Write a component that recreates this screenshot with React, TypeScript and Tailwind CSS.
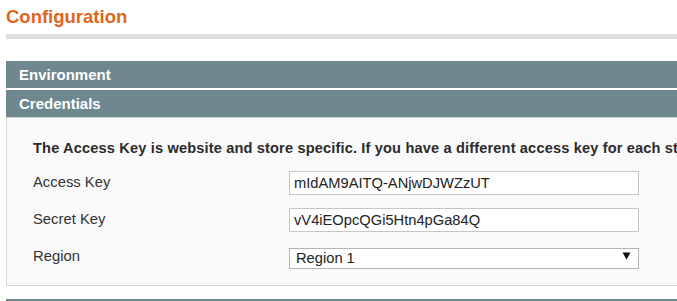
import React from 'react'

const rows = [
  { label: 'Access Key', value: 'mIdAM9AITQ-ANjwDJWZzUT' },
  { label: 'Secret Key', value: 'vV4iEOpcQGi5Htn4pGa84Q' },
]

function SectionHead({ title }: { title: string }) {
  return (
    <div className="h-[27px] bg-[#6f878e] flex items-center pl-[13px] text-white font-bold text-[15px] leading-none">
      {title}
    </div>
  )
}

export default function App() {
  return (
    <div className="w-[677px] h-[301px] overflow-hidden bg-white font-['Liberation_Sans',Arial,sans-serif] text-[#2f2f2f]">
      <div className="w-[1000px] pl-[6px]">
        {/* page title */}
        <h3 className="h-[34px] pt-[6px] text-[18.5px] leading-[22px] font-bold text-[#e0661c]">Configuration</h3>
        <div className="h-[5px] bg-[#dfdfdf]" />

        <div className="mt-[22px] flex flex-col gap-[2px]">
          <SectionHead title="Environment" />
          <div>
            <div className="border-b border-[#c9d4d6]">
              <SectionHead title="Credentials" />
            </div>
            <div className="bg-[#fafafa] border-x border-b border-[#d6d6d6] pl-[26px] pt-[21px] pb-[10px]">
              <p className="text-[14.6px] leading-[18px] tracking-[0.15px] font-bold text-[#2b2b2b] whitespace-nowrap">
                The Access Key is website and store specific. If you have a different access key for each store view, please use the scope switcher.
              </p>
              <div className="mt-[7px]">
                {rows.map((r) => (
                  <div key={r.label} className="h-[37px] flex items-center">
                    <label className="w-[256px] text-[14.8px] text-[#333]">{r.label}</label>
                    <input
                      readOnly
                      value={r.value}
                      className="w-[350px] h-[24px] border border-[#c6c6c6] bg-white px-[4px] text-[14.7px] text-[#222] outline-none font-['Liberation_Sans',Arial,sans-serif]"
                    />
                  </div>
                ))}
                <div className="h-[37px] flex items-center">
                  <label className="w-[256px] text-[14.8px] text-[#333]">Region</label>
                  <div className="relative w-[350px] h-[21px]">
                    <select
                      defaultValue="1"
                      className="appearance-none w-full h-full border border-[#b5b5b5] bg-white pl-[6px] text-[14.7px] leading-[19px] text-[#222] outline-none font-['Liberation_Sans',Arial,sans-serif]"
                    >
                      <option value="1">Region 1</option>
                      <option value="2">Region 2</option>
                    </select>
                    <span className="absolute right-[8px] top-[5px] pointer-events-none">
                      <svg width="9" height="9" viewBox="0 0 9 9"><path d="M0.5 1.5h8L4.5 8.5z" fill="#111" /></svg>
                    </span>
                  </div>
                </div>
              </div>
            </div>
          </div>
        </div>

        <div className="mt-[13px] h-[27px] bg-[#6f878e]" />
      </div>
    </div>
  )
}
